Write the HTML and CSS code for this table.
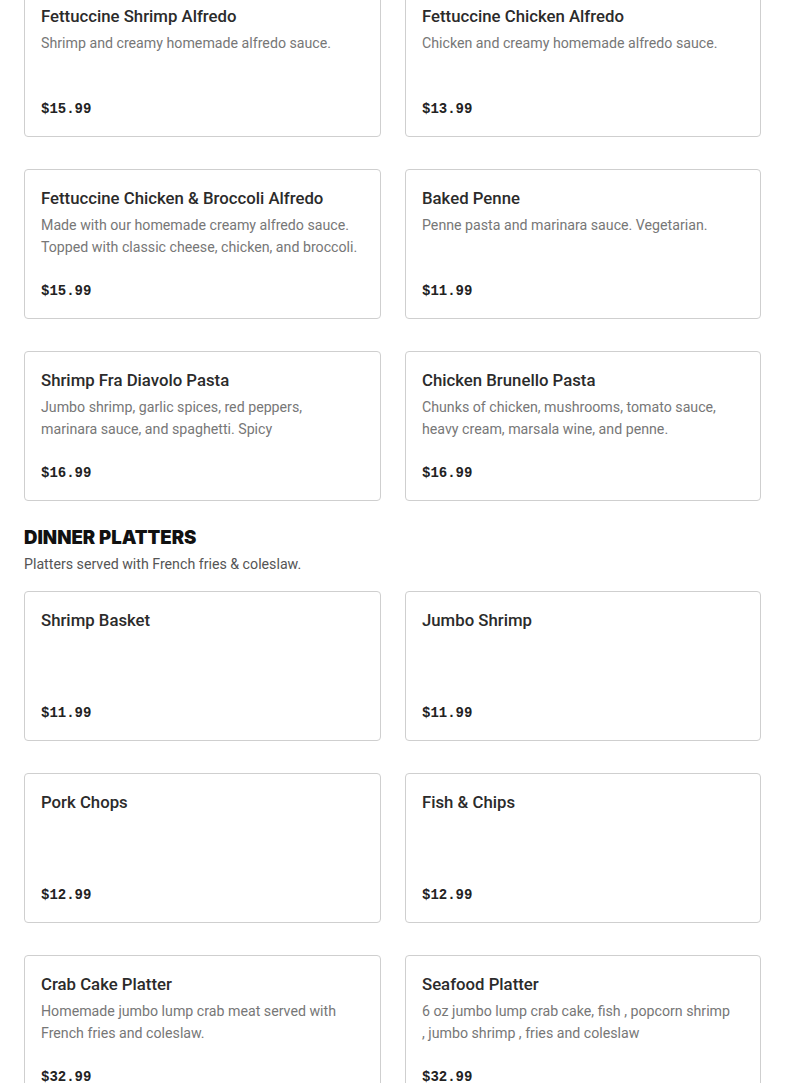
FILE: index.html
```html
<!DOCTYPE html>
<html>
<head>
<meta charset="utf-8">
<link rel="stylesheet" href="styles.css">
</head>
<body>
<div class="page">
  <section class="section first">
    <div class="grid">
      <div class="card"><div class="title">Fettuccine Shrimp Alfredo</div><div class="desc">Shrimp and creamy homemade alfredo sauce.</div><div class="price">$15.99</div></div>
      <div class="card"><div class="title">Fettuccine Chicken Alfredo</div><div class="desc">Chicken and creamy homemade alfredo sauce.</div><div class="price">$13.99</div></div>
      <div class="card"><div class="title">Fettuccine Chicken &amp; Broccoli Alfredo</div><div class="desc">Made with our homemade creamy alfredo sauce. Topped with classic cheese, chicken, and broccoli.</div><div class="price">$15.99</div></div>
      <div class="card"><div class="title">Baked Penne</div><div class="desc">Penne pasta and marinara sauce. Vegetarian.</div><div class="price">$11.99</div></div>
      <div class="card"><div class="title">Shrimp Fra Diavolo Pasta</div><div class="desc">Jumbo shrimp, garlic spices, red peppers, marinara sauce, and spaghetti. Spicy</div><div class="price">$16.99</div></div>
      <div class="card"><div class="title">Chicken Brunello Pasta</div><div class="desc">Chunks of chicken, mushrooms, tomato sauce, heavy cream, marsala wine, and penne.</div><div class="price">$16.99</div></div>
    </div>
  </section>
  <section class="section">
    <h2 class="heading">DINNER PLATTERS</h2>
    <p class="sub">Platters served with French fries &amp; coleslaw.</p>
    <div class="grid">
      <div class="card"><div class="title">Shrimp Basket</div><div class="price">$11.99</div></div>
      <div class="card"><div class="title">Jumbo Shrimp</div><div class="price">$11.99</div></div>
      <div class="card"><div class="title">Pork Chops</div><div class="price">$12.99</div></div>
      <div class="card"><div class="title">Fish &amp; Chips</div><div class="price">$12.99</div></div>
      <div class="card"><div class="title">Crab Cake Platter</div><div class="desc">Homemade jumbo lump crab meat served with French fries and coleslaw.</div><div class="price">$32.99</div></div>
      <div class="card"><div class="title">Seafood Platter</div><div class="desc">6 oz jumbo lump crab cake, fish , popcorn shrimp<br>, jumbo shrimp , fries and coleslaw</div><div class="price">$32.99</div></div>
    </div>
  </section>
</div>
</body>
</html>
```

FILE: styles.css
```css
html, body {
  margin: 0;
  padding: 0;
  background: #fff;
}
body {
  font-family: Roboto, "Noto Sans", sans-serif;
  color: #2d2d2d;
  overflow: hidden;
}
.page {
  padding: 0 24px;
}
.section.first {
  margin-top: -13px;
}
.grid {
  display: grid;
  grid-template-columns: 357px 356px;
  column-gap: 24px;
  row-gap: 32px;
}
.card {
  box-sizing: border-box;
  height: 150px;
  border: 1px solid #cfcfcf;
  border-radius: 4px;
  padding: 16px;
  display: flex;
  flex-direction: column;
}
.title {
  font-size: 16.75px;
  line-height: 24px;
  font-weight: 500;
  color: #2b2b2b;
  margin-bottom: 4px;
}
.desc {
  font-size: 14.2px;
  line-height: 22px;
  color: #777;
  padding-right: 4px;
}
.price {
  margin-top: auto;
  font-family: "Liberation Mono", monospace;
  font-weight: 700;
  font-size: 14px;
  line-height: 22px;
  color: #222;
}
.heading {
  margin: 25px 0 0 0;
  font-family: Inter, Roboto, sans-serif;
  font-size: 18.6px;
  line-height: 22px;
  font-weight: 900;
  color: #111;
}
.sub {
  margin: 5px 0 16px 0;
  font-size: 14.2px;
  line-height: 22px;
  color: #555;
}
```
